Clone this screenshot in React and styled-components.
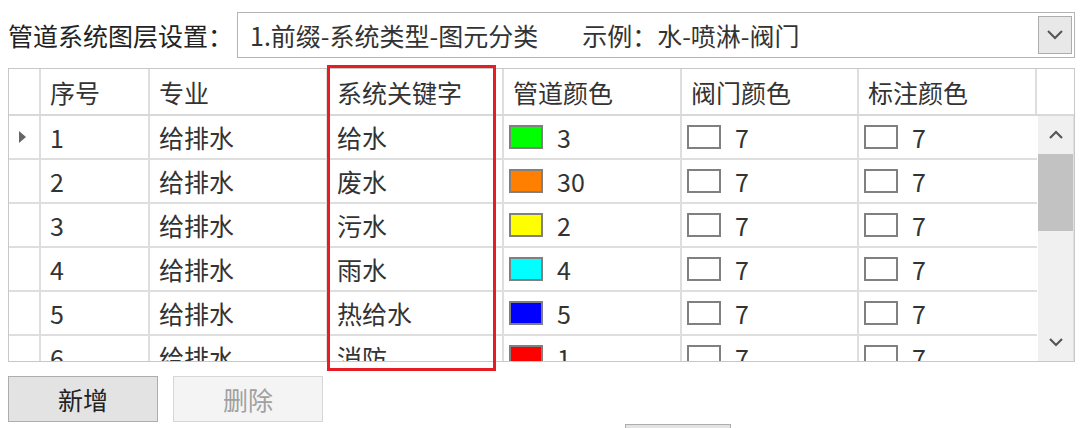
import React from 'react'
import styled, { createGlobalStyle } from 'styled-components'

const GlobalStyle = createGlobalStyle`
  body {
    margin: 0;
    background: #fff;
    font-family: 'Noto Sans CJK SC', 'Noto Sans', sans-serif;
    color: #333;
  }
`

const COLS = '32px 109px 178px 176px 178px 177px 178px 1fr'

const rows = [
  { id: 1, major: '给排水', key: '给水', pipe: '#00ff00', pipeNo: 3 },
  { id: 2, major: '给排水', key: '废水', pipe: '#ff7f00', pipeNo: 30 },
  { id: 3, major: '给排水', key: '污水', pipe: '#ffff00', pipeNo: 2 },
  { id: 4, major: '给排水', key: '雨水', pipe: '#00ffff', pipeNo: 4 },
  { id: 5, major: '给排水', key: '热给水', pipe: '#0000ff', pipeNo: 5 },
  { id: 6, major: '给排水', key: '消防', pipe: '#ff0000', pipeNo: 1 },
]

const App = () => {
  return (
    <>
      <GlobalStyle />
      <Page>
        <TopBar>
          <Label>管道系统图层设置：</Label>
          <Combo>
            <ComboText>
              1.前缀-系统类型-图元分类<Gap />示例：水-喷淋-阀门
            </ComboText>
            <DropButton>
              <svg width='18' height='12' viewBox='0 0 18 12'>
                <path d='M2 2 L9 9 L16 2' fill='none' stroke='#555' strokeWidth='2' />
              </svg>
            </DropButton>
          </Combo>
        </TopBar>

        <GridWrap>
          <Grid>
            <HeaderRow>
              <HeadCell />
              <HeadCell>序号</HeadCell>
              <HeadCell>专业</HeadCell>
              <HeadCell>系统关键字</HeadCell>
              <HeadCell>管道颜色</HeadCell>
              <HeadCell>阀门颜色</HeadCell>
              <HeadCell>标注颜色</HeadCell>
              <HeadCell $last />
            </HeaderRow>
            <Body>
              <Rows>
                {rows.map((r) => (
                  <Row key={r.id}>
                    <RowHead>{r.id === 1 && <Arrow />}</RowHead>
                    <Cell>{r.id}</Cell>
                    <Cell>{r.major}</Cell>
                    <Cell>{r.key}</Cell>
                    <Cell>
                      <Swatch $color={r.pipe} />
                      {r.pipeNo}
                    </Cell>
                    <Cell>
                      <Swatch $color='#fff' />7
                    </Cell>
                    <Cell $last>
                      <Swatch $color='#fff' />7
                    </Cell>
                  </Row>
                ))}
              </Rows>
              <ScrollBar>
                <ScrollArrow>
                  <svg width='16' height='10' viewBox='0 0 16 10'>
                    <path d='M2 8 L8 2 L14 8' fill='none' stroke='#555' strokeWidth='2.2' />
                  </svg>
                </ScrollArrow>
                <Thumb />
                <Track />
                <ScrollArrow>
                  <svg width='16' height='10' viewBox='0 0 16 10'>
                    <path d='M2 2 L8 8 L14 2' fill='none' stroke='#555' strokeWidth='2.2' />
                  </svg>
                </ScrollArrow>
              </ScrollBar>
            </Body>
          </Grid>
          <Highlight />
        </GridWrap>

        <Buttons>
          <Button>新增</Button>
          <Button disabled>删除</Button>
        </Buttons>
        <NextRow>
          <Button $small />
        </NextRow>
      </Page>
    </>
  )
}

const Page = styled.div`
  width: 1080px;
  height: 428px;
  overflow: hidden;
  padding: 12px 5px 0 8px;
  box-sizing: border-box;
`

const TopBar = styled.div`
  display: flex;
  align-items: center;
  height: 46px;
`

const Label = styled.div`
  font-size: 25px;
  width: 229px;
  flex: none;
  color: #222;
  white-space: nowrap;
`

const Combo = styled.div`
  flex: 1;
  height: 46px;
  box-sizing: border-box;
  border: 1px solid #b4b4b4;
  display: flex;
  align-items: center;
  padding: 0 2px 0 12px;
`

const ComboText = styled.div`
  flex: 1;
  font-size: 25px;
  color: #333;
  white-space: nowrap;
`

const Gap = styled.span`
  display: inline-block;
  width: 44px;
`

const DropButton = styled.div`
  width: 34px;
  height: 38px;
  box-sizing: border-box;
  border: 1px solid #adadad;
  background: #e8e8e8;
  display: flex;
  align-items: center;
  justify-content: center;
`

const GridWrap = styled.div`
  position: relative;
  margin-top: 10px;
`

const Grid = styled.div`
  border: 1px solid #c8c8c8;
  width: 1067px;
  box-sizing: border-box;
  background: #fff;
`

const HeaderRow = styled.div`
  display: grid;
  grid-template-columns: ${COLS};
  height: 47px;
  border-bottom: 2px solid #d8d8d8;
  box-sizing: border-box;
`

const HeadCell = styled.div`
  border-right: ${(p) => (p.$last ? 'none' : '2px solid #dedede')};
  display: flex;
  align-items: center;
  padding-left: 9px;
  font-size: 25px;
  color: #333;
  white-space: nowrap;
`

const Body = styled.div`
  display: flex;
  height: 245px;
  overflow: hidden;
`

const Rows = styled.div`
  width: 1028px;
  flex: none;
`

const Row = styled.div`
  display: grid;
  grid-template-columns: 32px 109px 178px 176px 178px 177px 178px;
  height: 44px;
  border-bottom: 2px solid #dedede;
  box-sizing: border-box;
`

const RowHead = styled.div`
  border-right: 2px solid #dedede;
  display: flex;
  align-items: center;
  justify-content: center;
`

const Arrow = styled.div`
  width: 0;
  height: 0;
  border-top: 6px solid transparent;
  border-bottom: 6px solid transparent;
  border-left: 7px solid #666;
  margin-left: -4px;
`

const Cell = styled.div`
  border-right: ${(p) => (p.$last ? 'none' : '2px solid #dedede')};
  display: flex;
  align-items: center;
  padding-left: 9px;
  font-size: 25px;
  color: #333;
  white-space: nowrap;
`

const Swatch = styled.span`
  display: inline-block;
  width: 34px;
  height: 24px;
  box-sizing: border-box;
  border: 2px solid #808080;
  background: ${(p) => p.$color};
  margin-right: 14px;
  margin-left: -4px;
`

const ScrollBar = styled.div`
  width: 36px;
  margin-left: 1px;
  background: #f0f0f0;
  display: flex;
  flex-direction: column;
  border-right: 1px solid #e0e0e0;
`

const ScrollArrow = styled.div`
  height: 38px;
  display: flex;
  align-items: center;
  justify-content: center;
  flex: none;
`

const Thumb = styled.div`
  height: 77px;
  background: #c2c2c2;
  flex: none;
`

const Track = styled.div`
  flex: 1;
`

const Highlight = styled.div`
  position: absolute;
  left: 319px;
  top: -3px;
  width: 169px;
  height: 306px;
  border: 3px solid #e81c24;
  box-sizing: border-box;
  pointer-events: none;
`

const Buttons = styled.div`
  display: flex;
  gap: 15px;
  margin-top: 14px;
`

const Button = styled.button`
  width: ${(p) => (p.$small ? '106px' : '150px')};
  height: 46px;
  box-sizing: border-box;
  border: 1px solid ${(p) => (p.disabled ? '#d6d6d6' : '#adadad')};
  background: ${(p) => (p.disabled ? '#f4f4f4' : '#e3e3e3')};
  color: ${(p) => (p.disabled ? '#a0a0a0' : '#222')};
  font-family: 'Noto Sans CJK SC', sans-serif;
  font-size: 25px;
  padding: 0;
`

const NextRow = styled.div`
  margin-top: 2px;
  padding-left: 617px;
`

export default App
